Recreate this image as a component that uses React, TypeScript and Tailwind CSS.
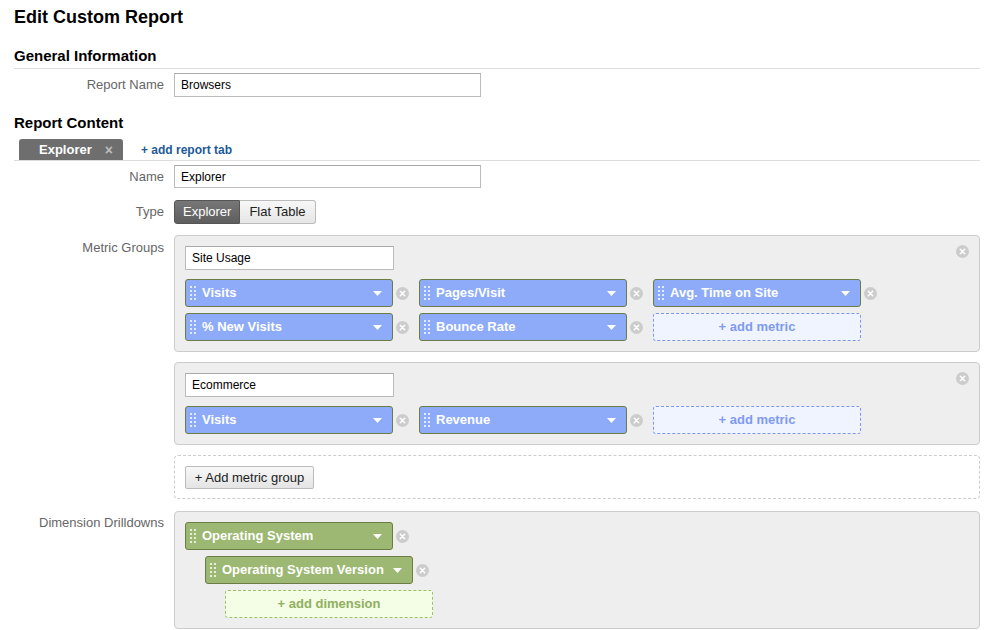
import type { ReactNode } from "react";

type Tone = "blue" | "green";

const pillTone: Record<Tone, string> = {
  blue: "bg-[#8eabfa] border-[#6c7c45]",
  green: "bg-[#9cb872] border-[#6c7c45]",
};

const slotTone: Record<Tone, string> = {
  blue: "bg-[#eff4fe] border-[#7c98ee] text-[#7f9bf0]",
  green: "bg-[#f4fde6] border-[#9cc16a] text-[#8fb061]",
};

function Grip() {
  return (
    <svg width="6" height="15" viewBox="0 0 6 15" className="shrink-0">
      {[0, 4, 8, 12].map((y) => (
        <g key={y} fill="#ffffff" opacity="0.75">
          <rect x="0" y={y} width="2" height="2" />
          <rect x="4" y={y} width="2" height="2" />
        </g>
      ))}
    </svg>
  );
}

function RemoveIcon() {
  return (
    <svg width="13" height="13" viewBox="0 0 13 13" className="shrink-0">
      <circle cx="6.5" cy="6.5" r="6.5" fill="#cccccc" />
      <path d="M4.3 4.3 L8.7 8.7 M8.7 4.3 L4.3 8.7" stroke="#ffffff" strokeWidth="1.5" strokeLinecap="round" />
    </svg>
  );
}

function Pill({ label, tone }: { label: string; tone: Tone }) {
  return (
    <div className="mr-[10px] flex items-center">
      <div
        className={`flex h-[28px] w-[208px] items-center rounded-[3px] border pl-[4px] pr-[10px] ${pillTone[tone]}`}
      >
        <Grip />
        <span className="ml-[6px] flex-1 truncate text-[13px] font-bold text-white">{label}</span>
        <svg width="9" height="5" viewBox="0 0 9 5">
          <path d="M0 0 H9 L4.5 5 Z" fill="#ffffff" />
        </svg>
      </div>
      <span className="ml-[3px]">
        <RemoveIcon />
      </span>
    </div>
  );
}

function AddSlot({ label, tone }: { label: string; tone: Tone }) {
  return (
    <div
      className={`flex h-[28px] w-[208px] items-center justify-center rounded-[3px] border border-dashed text-[13px] font-bold ${slotTone[tone]}`}
    >
      {label}
    </div>
  );
}

function TextBox({ value, width, height = "h-[24px]" }: { value: string; width: string; height?: string }) {
  return (
    <div
      className={`flex items-center border border-[#bbbbbb] border-t-[#a9a9a9] bg-white pl-[6px] text-[12px] text-black ${width} ${height}`}
    >
      {value}
    </div>
  );
}

function Row({ label, pad = "", children }: { label: string; pad?: string; children: ReactNode }) {
  const top = pad !== "";
  return (
    <div className={`flex ${top ? "items-start" : "items-center"}`}>
      <div className={`w-[150px] shrink-0 text-right text-[13px] text-[#666666] ${pad}`}>{label}</div>
      <div className="ml-[10px] flex-1">{children}</div>
    </div>
  );
}

function MetricGroup({ name, rows }: { name: string; rows: string[][] }) {
  return (
    <div className="relative rounded-[4px] border border-[#cccccc] bg-[#eeeeee] p-[10px]">
      <span className="absolute right-[10px] top-[9px]">
        <RemoveIcon />
      </span>
      <TextBox value={name} width="w-[209px]" />
      <div className="mt-[9px] flex flex-col gap-[6px]">
        {rows.map((row, i) => (
          <div key={i} className="flex items-center">
            {row.map((m) => (
              <Pill key={m} label={m} tone="blue" />
            ))}
            {i === rows.length - 1 && <AddSlot label="+ add metric" tone="blue" />}
          </div>
        ))}
      </div>
    </div>
  );
}

export default function App() {
  return (
    <div className="min-h-screen bg-white pl-[14px] pr-[15px] pt-[6px] font-['Liberation_Sans',Arial,sans-serif]">
      <h1 className="text-[18px] font-bold leading-[22px] text-black">Edit Custom Report</h1>

      <h2 className="mt-[19px] border-b border-[#dddddd] pb-[3px] text-[15px] font-bold leading-[18px] text-black">
        General Information
      </h2>
      <div className="mt-[4px]">
        <Row label="Report Name">
          <TextBox value="Browsers" width="w-[307px]" />
        </Row>
      </div>

      <h2 className="mt-[17px] text-[15px] font-bold leading-[18px] text-black">Report Content</h2>
      <div className="mt-[7px] flex items-end border-b border-[#dddddd]">
        <div className="ml-[5px] flex h-[21px] w-[104px] items-center rounded-t-[3px] bg-[#6e6e6e] pl-[20px] pr-[10px]">
          <span className="flex-1 text-[13px] font-bold text-white">Explorer</span>
          <span className="text-[14px] font-bold leading-none text-[#bdbdbd]">×</span>
        </div>
        <span className="mb-[1px] ml-[18px] text-[12px] font-bold text-[#1c5a98]">+ add report tab</span>
      </div>

      <div className="mt-[4px]">
        <Row label="Name">
          <TextBox value="Explorer" width="w-[307px]" height="h-[23px]" />
        </Row>
      </div>

      <div className="mt-[12px]">
        <Row label="Type">
          <div className="flex h-[24px] w-fit text-[13px]">
            <div className="flex items-center rounded-l-[3px] border border-[#555555] bg-gradient-to-b from-[#777777] to-[#5e5e5e] px-[8px] text-white">
              Explorer
            </div>
            <div className="flex items-center rounded-r-[3px] border border-l-0 border-[#bbbbbb] bg-gradient-to-b from-[#f7f7f7] to-[#e6e6e6] px-[9px] text-[#222222]">
              Flat Table
            </div>
          </div>
        </Row>
      </div>

      <div className="mt-[11px]">
        <Row label="Metric Groups" pad="pt-[3px]">
          <div className="flex flex-col gap-[10px]">
            <MetricGroup
              name="Site Usage"
              rows={[
                ["Visits", "Pages/Visit", "Avg. Time on Site"],
                ["% New Visits", "Bounce Rate"],
              ]}
            />
            <MetricGroup name="Ecommerce" rows={[["Visits", "Revenue"]]} />
            <div className="rounded-[4px] border border-dashed border-[#cccccc] px-[10px] pb-[9px] pt-[10px]">
              <div className="flex h-[23px] w-[129px] items-center justify-center rounded-[2px] border border-[#bbbbbb] bg-gradient-to-b from-[#f8f8f8] to-[#e4e4e4] text-[13px] text-[#222222]">
                + Add metric group
              </div>
            </div>
          </div>
        </Row>
      </div>

      <div className="mt-[12px]">
        <Row label="Dimension Drilldowns" pad="pt-[2px]">
          <div className="flex flex-col gap-[6px] rounded-[4px] border border-[#cccccc] bg-[#eeeeee] p-[10px]">
            <Pill label="Operating System" tone="green" />
            <div className="pl-[20px]">
              <Pill label="Operating System Version" tone="green" />
            </div>
            <div className="pl-[40px]">
              <AddSlot label="+ add dimension" tone="green" />
            </div>
          </div>
        </Row>
      </div>
    </div>
  );
}
